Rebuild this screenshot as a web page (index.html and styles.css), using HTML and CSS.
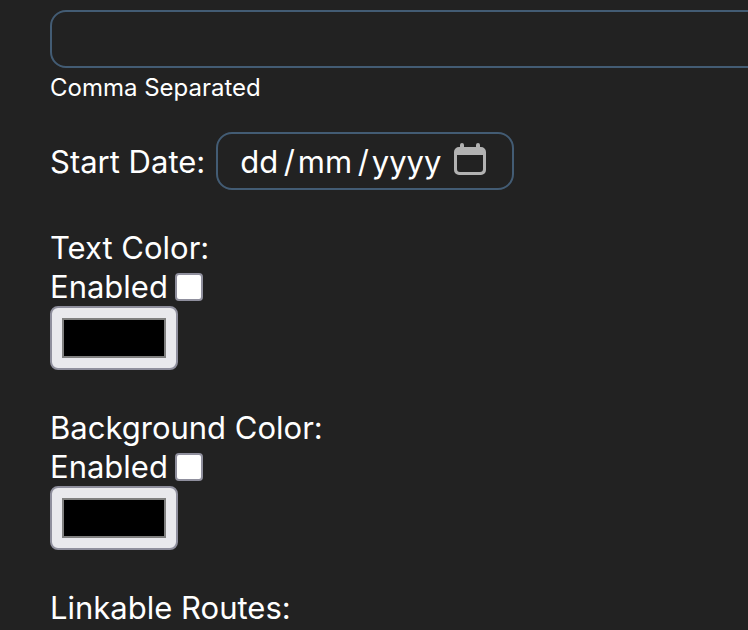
FILE: index.html
```html
<!DOCTYPE html>
<html lang="en-GB">
<head>
<meta charset="utf-8">
<meta name="viewport" content="width=device-width, initial-scale=1">
<title>Route settings</title>
<link rel="stylesheet" href="styles.css">
</head>
<body>
<form class="form">
  <div class="tags">
    <input class="box" type="text" id="tags" aria-labelledby="tags-hint">
    <label class="hint" id="tags-hint" for="tags">Comma Separated</label>
  </div>

  <div class="date-row">
    <label for="start">Start Date:</label>
    <div class="box date">
      <input class="date-input" type="text" id="start" placeholder="dd&#8202;&#8202;/&#8202;mm&#8202;&#8202;/&#8202;yyyy">
      <button class="date-button" type="button" aria-label="Choose date">
        <svg class="icon" viewBox="0 0 32 32" aria-hidden="true">
          <path fill="currentColor" fill-rule="evenodd" d="M6 4V2a2 2 0 0 1 4 0v2h12V2a2 2 0 0 1 4 0v2h1a5 5 0 0 1 5 5v18a5 5 0 0 1-5 5H5a5 5 0 0 1-5-5V9a5 5 0 0 1 5-5zM3 12v14a3 3 0 0 0 3 3h20a3 3 0 0 0 3-3V12z"/>
        </svg>
      </button>
    </div>
  </div>

  <div class="group">
    <label for="text-color">Text Color:</label>
    <div class="enable">
      <label for="text-on">Enabled</label>
      <input class="check" type="checkbox" id="text-on">
    </div>
    <input class="color" type="color" id="text-color" value="#000000">
  </div>

  <div class="group">
    <label for="bg-color">Background Color:</label>
    <div class="enable">
      <label for="bg-on">Enabled</label>
      <input class="check" type="checkbox" id="bg-on">
    </div>
    <input class="color" type="color" id="bg-color" value="#000000">
  </div>

  <div class="group">Linkable Routes:</div>
</form>
</body>
</html>
```
FILE: styles.css
```css
* {
  box-sizing: border-box;
}

html {
  background: #222;
}

body {
  margin: 0;
  overflow-x: hidden;
  color: #fff;
  font: 31px/39px Inter, "Liberation Sans", sans-serif;
}

.form {
  padding: 10px 0 0 50px;
}

.box {
  height: 58px;
  border: 2px solid #435c74;
  border-radius: 16px;
  background: transparent;
  color: inherit;
  font: inherit;
}

/* The field runs past the right edge of the window. */
.tags .box {
  display: block;
  width: calc(100% + 32px);
}

.hint {
  display: block;
  font-size: 24px;
  line-height: 40px;
}

.date-row {
  display: flex;
  align-items: center;
  gap: 11px;
  margin-top: 24px;
}

.date {
  display: flex;
  align-items: center;
  width: 298px;
  padding: 0 26px 0 22px;
}

.date-input {
  flex: 1;
  min-width: 0;
  padding: 0;
  border: 0;
  background: transparent;
  color: inherit;
  font: inherit;
}

.date-input::placeholder {
  color: #fff;
  opacity: 1;
}

.date-button {
  flex: none;
  padding: 0 0 4px;
  border: 0;
  background: transparent;
  color: #b2b2b2;
}

.icon {
  display: block;
  width: 32px;
  height: 32px;
}

.group {
  display: flex;
  flex-direction: column;
  align-items: flex-start;
  margin-top: 38px;
}

.enable {
  display: flex;
  align-items: center;
  gap: 7px;
}

.check {
  appearance: none;
  width: 28px;
  height: 28px;
  margin: 0;
  border: 2px solid #8f8f9d;
  border-radius: 4px;
  background: #fff;
}

.check:checked {
  background: #0060df;
}

.color {
  appearance: none;
  width: 128px;
  height: 64px;
  padding: 10px;
  border: 2px solid #8f8f9d;
  border-radius: 8px;
  background: #e9e9ed;
}

.color::-webkit-color-swatch-wrapper {
  padding: 0;
}

.color::-webkit-color-swatch {
  border: 2px solid #808080;
  border-radius: 0;
}
```
